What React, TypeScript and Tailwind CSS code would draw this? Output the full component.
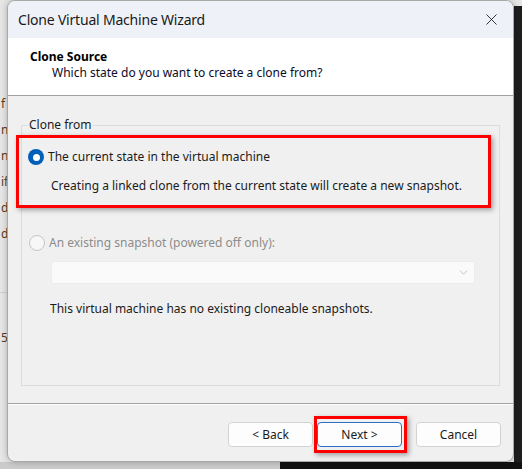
import { ChevronDown, X } from "lucide-react";

const font = { fontFamily: '"Noto Sans", "Liberation Sans", sans-serif' };

function Radio({ checked, disabled }: { checked?: boolean; disabled?: boolean }) {
  if (checked) {
    return (
      <span className="flex h-[16px] w-[16px] shrink-0 items-center justify-center rounded-full bg-[#005fb8]">
        <span className="h-[7px] w-[7px] rounded-full bg-white" />
      </span>
    );
  }
  return (
    <span
      className={
        "h-[16px] w-[16px] shrink-0 rounded-full border bg-[#f7f7f7] " +
        (disabled ? "border-[#c6c6c6]" : "border-[#8a8a8a]")
      }
    />
  );
}

function Button({ label, focused }: { label: string; focused?: boolean }) {
  return (
    <button
      type="button"
      className={
        "flex h-[25px] w-[85px] items-center justify-center rounded-[4px] border bg-[#fdfdfd] text-[12px] text-[#1b1b1b] " +
        (focused ? "border-[#2a6fc4]" : "border-[#d3d3d3]")
      }
    >
      {label}
    </button>
  );
}

// letters of the window behind, peeking out at the left edge
const edgeGlyphs = ["f", "n", "n", "if", "d", "d", "", "", "", "5"];

export default function App() {
  return (
    <div className="relative h-[469px] w-[522px] overflow-hidden bg-[#e6e6e6]" style={font}>
      {/* desktop behind the dialog */}
      <div className="absolute left-[1px] top-[97px] flex flex-col text-[12px] leading-[14px] text-[#5a3d1a]">
        {edgeGlyphs.map((g, i) => (
          <span key={i} className="h-[26px]">
            {g}
          </span>
        ))}
      </div>
      <div className="absolute left-0 top-[292px] h-px w-[7px] bg-[#cfcfcf]" />
      <div className="absolute right-0 top-[6px] bottom-0 w-[8px] bg-[#1e1e1e]" />
      <div className="absolute bottom-0 left-[280px] right-0 h-[7px] bg-[#111111]" />
      <div className="absolute bottom-0 left-0 h-[7px] w-[280px] bg-[#cbcbcb]" />

      <div className="relative z-10 ml-[7px] flex h-[462px] w-[507px] flex-col overflow-hidden rounded-[8px] border border-[#a8a8a8] bg-[#f0f0f0] shadow-[0_0_6px_rgba(0,0,0,0.25)]">
        {/* title bar */}
        <div className="flex h-[37px] shrink-0 items-center justify-between bg-[#eef2f8] pl-[10px] pr-[12px]">
          <span className="text-[14px] tracking-[-0.2px] text-[#1a1a1a]">Clone Virtual Machine Wizard</span>
          <X className="h-[19px] w-[19px] text-[#1a1a1a]" strokeWidth={1.1} />
        </div>

        {/* header */}
        <div className="flex h-[58px] shrink-0 flex-col border-b border-[#a0a0a0] bg-white pl-[22px] pt-[11px] text-[12px] leading-[15px] text-black">
          <span className="font-bold">Clone Source</span>
          <span className="mt-[1px] pl-[22px] text-[#0b0b2a]">Which state do you want to create a clone from?</span>
        </div>

        {/* body */}
        <div className="flex flex-1 flex-col px-[13px] pt-[21px] pb-[17px] text-[12px] text-[#1b1b1b]">
          <fieldset className="flex-1 border border-[#dcdcdc] px-0 pb-0">
            <legend className="ml-[6px] px-[1px] leading-[16px] text-[#1b1b1b]">Clone from</legend>

            <div className="-ml-[6px] mt-[2px] w-[475px] border-[3px] border-[#ff0000] pb-[10px] pt-[10px] shadow-[2px_2px_5px_rgba(0,0,0,0.35)]">
              <div className="flex items-center gap-[4px] pl-[9px]">
                <Radio checked />
                <span>The current state in the virtual machine</span>
              </div>
              <div className="mt-[11px] pl-[32px]">
                Creating a linked clone from the current state will create a new snapshot.
              </div>
            </div>

            <div className="mt-[26px] flex items-center gap-[4px] pl-[7px]">
              <Radio disabled />
              <span className="text-[#8c8c8c]">An existing snapshot (powered off only):</span>
            </div>

            <div className="ml-[29px] mt-[9px] flex h-[23px] w-[424px] items-center justify-end rounded-[3px] border border-[#ececec] bg-[#fafafa] pr-[4px]">
              <ChevronDown className="h-[13px] w-[13px] text-[#a8a8a8]" strokeWidth={1.2} />
            </div>

            <div className="ml-[28px] mt-[16px]">This virtual machine has no existing cloneable snapshots.</div>
          </fieldset>
        </div>

        {/* footer */}
        <div className="flex h-[58px] shrink-0 items-start justify-end border-t border-[#a0a0a0] pr-[12px] pt-[18px] shadow-[inset_0_1px_0_#ffffff]">
          <Button label="< Back" />
          <div className="relative ml-[4px]">
            <Button label="Next >" focused />
            <div className="pointer-events-none absolute -left-[3px] -right-[5px] -top-[6px] -bottom-[6px] border-[3px] border-[#ff0000] shadow-[2px_2px_5px_rgba(0,0,0,0.35)]" />
          </div>
          <div className="ml-[14px]">
            <Button label="Cancel" />
          </div>
        </div>
      </div>
    </div>
  );
}
